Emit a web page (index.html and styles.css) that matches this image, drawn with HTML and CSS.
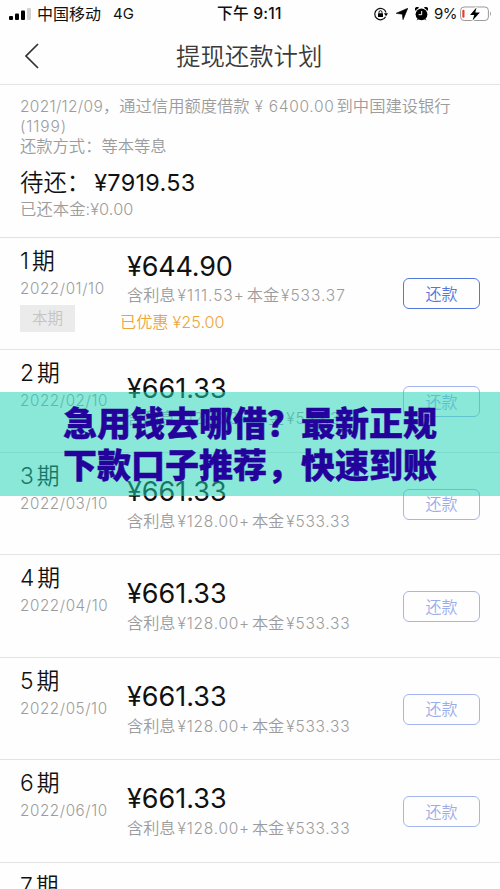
FILE: index.html
```html
<!DOCTYPE html>
<html lang="zh-CN">
<head>
<meta charset="utf-8">
<title>提现还款计划</title>
<link rel="stylesheet" href="styles.css">
</head>
<body>
<div class="screen">
  <div class="status">
    <svg class="signal" width="22" height="12" viewBox="0 0 22 12"><rect x="0" y="8" width="4" height="4" rx="1"/><rect x="6" y="5.500" width="4" height="6.500" rx="1"/><rect x="12" y="2.500" width="4" height="9.500" rx="1"/><rect x="18" y="0" width="4" height="12" rx="1" fill="#d2d2d2"/></svg>
    <span class="carrier">中国移动</span><span class="net">4G</span>
    <span class="time">下午 9:11</span>
    <svg class="lock" width="14" height="14" viewBox="0 0 14 14"><path d="M11.600 9.700A5.700 5.700 0 1 1 12 5.500" fill="none" stroke="#111" stroke-width="1.200"/><path d="M9.900 6.200h4.100l-1.900 3z"/><rect x="4" y="6.300" width="5" height="3.800" rx=".5"/><path d="M5 6.500V5.200a1.500 1.500 0 0 1 3 0v1.300" fill="none" stroke="#111"/></svg>
    <svg class="arrow" width="12" height="12" viewBox="0 0 12 12"><path d="M11.800.2 7 11.700 6.300 6.200 .2 5.300z" stroke="#000" stroke-width=".6"/></svg>
    <svg class="alarm" width="13" height="14" viewBox="0 0 13 14"><circle cx="6.500" cy="7.300" r="5.900"/><path d="M.3 3.700A2.200 2.200 0 0 1 4 .8zM12.700 3.700A2.200 2.200 0 0 0 9 .8zM1.500 13.500l2-3 1.500 1zM11.500 13.500l-2-3-1.500 1z"/><path d="M6.700 4v3.700H3.600" fill="none" stroke="#fff"/></svg>
    <span class="percent">9%</span>
    <svg class="battery" width="32" height="16" viewBox="0 0 32 16"><rect x=".6" y="1" width="27.800" height="13.500" rx="3.500" fill="#fff" stroke="#999"/><path d="M30 5.500q2 2.300 0 4.500z" fill="#999"/><rect x="2.300" y="3.800" width="2.200" height="8" rx="1" fill="#e83b32"/><path d="M16.500 1.500 10 8.900h4.200l-1.600 5.600 7.300-8h-4.600z" stroke="#fff" stroke-width="2.500"/><path d="M16.500 1.500 10 8.900h4.200l-1.600 5.600 7.300-8h-4.600z"/></svg>
  </div>
  <header class="nav">
    <svg class="back" width="14" height="26" viewBox="0 0 14 26"><path d="M13 1 1 13l12 12" fill="none" stroke="#333" stroke-width="1.700"/></svg>
    <h1>提现还款计划</h1>
  </header>
  <section class="summary">
    <p class="loan"><span class="day">2021/12/09</span>，通过信用额度借款<span class="yen">¥ 6400.00</span>到中国建设银行</p>
    <p class="account">(1199)</p>
    <p class="method">还款方式：等本等息</p>
    <p class="due">待还：<span>¥7919.53</span></p>
    <p class="paid">已还本金:¥0.00</p>
  </section>
  <main class="plan">
    <article class="row current">
      <div class="term"><h2>1期</h2><p class="date">2022/01/10</p><span class="tag">本期</span></div>
      <div class="money"><p class="amount">¥644.90</p><p class="detail">含利息<span>¥111.53+</span>本金<span>¥533.37</span></p><p class="saved">已优惠<span>¥25.00</span></p></div>
      <button>还款</button>
    </article>
    <article class="row"><div class="term"><h2>2期</h2><p class="date">2022/02/10</p></div><div class="money"><p class="amount">¥661.33</p><p class="detail">含利息<span>¥128.00+</span>本金<span>¥533.33</span></p></div><button>还款</button></article>
    <article class="row"><div class="term"><h2>3期</h2><p class="date">2022/03/10</p></div><div class="money"><p class="amount">¥661.33</p><p class="detail">含利息<span>¥128.00+</span>本金<span>¥533.33</span></p></div><button>还款</button></article>
    <article class="row"><div class="term"><h2>4期</h2><p class="date">2022/04/10</p></div><div class="money"><p class="amount">¥661.33</p><p class="detail">含利息<span>¥128.00+</span>本金<span>¥533.33</span></p></div><button>还款</button></article>
    <article class="row"><div class="term"><h2>5期</h2><p class="date">2022/05/10</p></div><div class="money"><p class="amount">¥661.33</p><p class="detail">含利息<span>¥128.00+</span>本金<span>¥533.33</span></p></div><button>还款</button></article>
    <article class="row"><div class="term"><h2>6期</h2><p class="date">2022/06/10</p></div><div class="money"><p class="amount">¥661.33</p><p class="detail">含利息<span>¥128.00+</span>本金<span>¥533.33</span></p></div><button>还款</button></article>
    <article class="row"><div class="term"><h2>7期</h2></div></article>
  </main>
  <div class="banner"><p>急用钱去哪借？最新正规</p><p>下款口子推荐，快速到账</p></div>
</div>
</body>
</html>
```
FILE: styles.css
```css
* { box-sizing: border-box; margin: 0; padding: 0; }
body { background: #fefefe; font-family: Inter, "Noto Sans CJK SC", sans-serif; font-weight: 350; color: #111; }
.screen { position: relative; width: 500px; height: 889px; overflow: hidden; }
p, h1, h2, span { white-space: nowrap; }

.status { display: flex; align-items: center; height: 28px; padding-left: 9px; font-size: 15px; font-weight: 400; line-height: 28px; }
.status svg { flex: none; }
.carrier { margin-left: 6px; width: 65px; font-size: 16px; }
.net { margin-left: 11px; width: 24px; }
.time { margin-left: 80px; width: 66px; font-size: 15.7px; font-weight: 500; letter-spacing: .2px; }
.lock { margin-left: 91px; }
.arrow { margin-left: 8px; }
.alarm { margin-left: 7px; }
.percent { margin-left: 6px; width: 25px; letter-spacing: -.5px; }
.battery { margin-left: 1px; }

.nav { display: flex; align-items: center; height: 57px; border-bottom: 1px solid #e4e4e4; padding-left: 25px; }
.nav h1 { margin-left: 137px; font-size: 24.4px; font-weight: 350; line-height: 40px; color: #3a3a3a; }

.summary { height: 153px; padding: 11px 20px 0; font-size: 16.3px; color: #9c9c9c; border-bottom: 1px solid #e2e2e2; }
.summary p { line-height: 20px; }
.summary .account { line-height: 19px; }
.day { font-size: 15.5px; letter-spacing: .3px; }
.yen { margin: 0 2px 0 5px; font-size: 15.5px; letter-spacing: .7px; }
.account { font-size: 15.5px; letter-spacing: .9px; }
.summary .due { height: 34px; margin-top: 10px; font-size: 23.4px; line-height: 34px; color: #111; }
.due span { margin-left: 4px; font-weight: 400; letter-spacing: .3px; }
.summary .paid { letter-spacing: .1px; margin-top: -1px; }

.row { display: flex; height: 102.6px; padding: 7px 20px 0; border-bottom: 1px solid #e4e4e4; }
.row.current { height: 112px; }
.term { width: 107px; }
.term h2 { height: 32px; font-size: 22.8px; font-weight: 350; line-height: 32px; letter-spacing: 3px; }
.date { height: 24px; font-size: 15.2px; line-height: 24px; color: #9c9c9c; letter-spacing: .6px; }
.tag { display: block; width: 55px; height: 27px; margin-top: 4px; background: #ebebeb; color: #c4c4c4; font-size: 15.5px; line-height: 27px; text-align: center; }
.money { width: 276px; padding-top: 14px; }
.current .money { padding-top: 4px; }
.amount { height: 36px; font-size: 27px; font-weight: 400; line-height: 36px; }
.current .amount { letter-spacing: -.2px; }
.detail { height: 22px; font-size: 16.2px; line-height: 22px; color: #9c9c9c; }
.current .detail { margin-top: -1px; }
.detail span { margin: 0 2px; font-size: 15.5px; letter-spacing: .75px; }
.current .detail span { letter-spacing: .95px; }
.saved { margin: 4px 0 0 -7px; font-size: 16.2px; line-height: 24px; color: #eda43a; }
.saved span { margin-left: 4px; }
button { width: 77px; height: 31px; margin-top: 29px; border: 1.5px solid #a5b5ed; border-radius: 6px; background: transparent; color: #9bade9; font: 350 16px/28px Inter, "Noto Sans CJK SC", sans-serif; }
.current button { margin-top: 33px; border-color: #5278dc; color: #5278dc; }

.banner { position: absolute; left: 0; top: 392px; width: 500px; height: 104px; padding-top: 11px; background: rgba(30, 211, 180, .52); color: #24039c; text-align: center; font-size: 34px; font-weight: 900; line-height: 42px; -webkit-text-stroke: .4px #24039c; }
```
